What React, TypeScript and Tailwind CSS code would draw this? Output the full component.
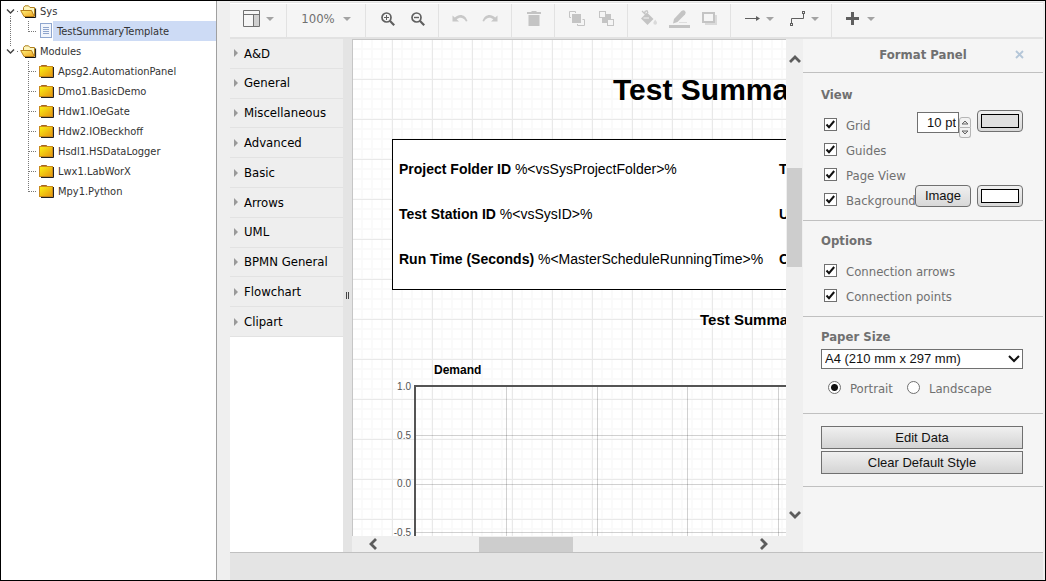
import { useState } from "react";
import type { ReactNode } from "react";

const PALETTES = [
  "A&D",
  "General",
  "Miscellaneous",
  "Advanced",
  "Basic",
  "Arrows",
  "UML",
  "BPMN General",
  "Flowchart",
  "Clipart",
];

const MODULES = [
  "Apsg2.AutomationPanel",
  "Dmo1.BasicDemo",
  "Hdw1.IOeGate",
  "Hdw2.IOBeckhoff",
  "Hsdl1.HSDataLogger",
  "Lwx1.LabWorX",
  "Mpy1.Python",
];

/* ---------- tree ---------- */

function OpenFolder() {
  return (
    <svg width="17" height="16" viewBox="0 0 17 16" className="shrink-0">
      <defs>
        <linearGradient id="open-folder" x1="0" y1="0" x2="1" y2="1">
          <stop offset="0" stopColor="#fff27a" />
          <stop offset="1" stopColor="#f0a420" />
        </linearGradient>
      </defs>
      <path d="M3.5 11V4.5L5 2.8H8.5L10 4.5H14.5V13" fill="#fdf6bd" stroke="#b0801c" />
      <path d="M15.6 5.5V14.5H5" fill="none" stroke="#111" />
      <path d="M0.7 7.5H11.5L14.3 13.5H4Z" fill="url(#open-folder)" stroke="#b8801c" />
    </svg>
  );
}

function ClosedFolder() {
  return (
    <svg width="16" height="16" viewBox="0 0 16 16" className="shrink-0">
      <defs>
        <linearGradient id="folder" x1="0" y1="0" x2="1" y2="1">
          <stop offset="0" stopColor="#fbf316" />
          <stop offset="1" stopColor="#e6940f" />
        </linearGradient>
      </defs>
      <path d="M2 14.5H14.5V4" fill="none" stroke="#222" />
      <path d="M1 4L2.5 2H7.5L9 4Z" fill="#a8661c" />
      <rect x="0.5" y="3.5" width="13" height="10" fill="url(#folder)" stroke="#c98a1c" />
    </svg>
  );
}

function DocumentIcon() {
  return (
    <svg width="14" height="16" viewBox="0 0 14 16" className="shrink-0">
      <rect x="1.5" y="0.5" width="11" height="14" fill="#f1f5fc" stroke="#8fa6cf" />
      <path d="M4 4.5H10M4 6.5H10M4 8.5H10M4 10.5H10" stroke="#8ea4cc" />
    </svg>
  );
}

function RootGuide({ last }: { last?: boolean }) {
  return (
    <svg width="19" height="20" viewBox="0 0 19 20" className="shrink-0">
      <path d="M6 8.5L9.5 12L13 8.5" fill="none" stroke="#404040" strokeWidth="1.4" />
      <path d={last ? "M9.5 0V5" : "M9.5 15V20"} stroke="#777" strokeDasharray="1 1" />
      <path d="M16 10.5H18" stroke="#777" strokeDasharray="1 1" />
    </svg>
  );
}

function ChildGuide({ last, through }: { last?: boolean; through?: boolean }) {
  return (
    <svg width="38" height="20" viewBox="0 0 38 20" className="shrink-0">
      {through && <path d="M9.5 0V20" stroke="#777" strokeDasharray="1 1" />}
      <path d={last ? "M27.5 0V11" : "M27.5 0V20"} stroke="#777" strokeDasharray="1 1" />
      <path d="M28 10.5H36" stroke="#777" strokeDasharray="1 1" />
    </svg>
  );
}

function Tree() {
  const [selected, setSelected] = useState("TestSummaryTemplate");
  const label = (name: string) =>
    selected === name
      ? "flex h-5 flex-1 items-center bg-[#cddbf5] pt-0.5 pl-1 text-left"
      : "flex h-5 flex-1 items-center pt-0.5 pl-[3px] text-left";
  return (
    <nav
      aria-label="Project"
      className="w-[216px] shrink-0 border-r border-[#a0a0a0] bg-white text-[11px] text-[#333]"
    >
      <ul>
        <li>
          <div className="flex items-center">
            <RootGuide />
            <OpenFolder />
            <button className={label("Sys")} onClick={() => setSelected("Sys")}>
              Sys
            </button>
          </div>
          <ul>
            <li className="flex items-center">
              <ChildGuide last through />
              <DocumentIcon />
              <button
                className={label("TestSummaryTemplate")}
                onClick={() => setSelected("TestSummaryTemplate")}
              >
                TestSummaryTemplate
              </button>
            </li>
          </ul>
        </li>
        <li>
          <div className="flex items-center">
            <RootGuide last />
            <OpenFolder />
            <button className={label("Modules")} onClick={() => setSelected("Modules")}>
              Modules
            </button>
          </div>
          <ul>
            {MODULES.map((name, i) => (
              <li key={name} className="flex items-center">
                <ChildGuide last={i === MODULES.length - 1} />
                <ClosedFolder />
                <button className={label(name)} onClick={() => setSelected(name)}>
                  {name}
                </button>
              </li>
            ))}
          </ul>
        </li>
      </ul>
    </nav>
  );
}

/* ---------- toolbar ---------- */

function Caret() {
  return (
    <svg width="8" height="4" viewBox="0 0 8 4">
      <path d="M0 0H8L4 4Z" fill="#a3a3a3" />
    </svg>
  );
}

function Group({ className, children }: { className: string; children: ReactNode }) {
  return (
    <div
      className={
        "flex h-full shrink-0 items-center justify-center border-r border-[#e2e2e2] pb-1 " + className
      }
    >
      {children}
    </div>
  );
}

function Tool({ label, children }: { label: string; children: ReactNode }) {
  return (
    <button aria-label={label} className="flex h-6 w-[30px] items-center justify-center">
      {children}
    </button>
  );
}

function Toolbar() {
  return (
    <div className="flex h-[34px] shrink-0 items-center overflow-hidden border-t border-white bg-[#f5f5f5]">
      <Group className="w-[57px]">
        <button aria-label="View" className="flex items-center gap-1.5">
          <svg width="17" height="17" viewBox="0 0 17 17">
            <rect x="11" y="5" width="5" height="11" fill="#cfcfcf" />
            <path d="M0.5 0.5H16.5V16.5H0.5ZM0.5 4.5H16.5M10.5 4.5V16.5" fill="none" stroke="#707070" />
          </svg>
          <Caret />
        </button>
      </Group>
      <Group className="w-[79px]">
        <button className="flex items-center gap-2 text-[13px] leading-4 text-[#707070]">
          100%
          <Caret />
        </button>
      </Group>
      <Group className="w-[73px] pl-0.5">
        <Tool label="Zoom in">
          <svg width="14" height="14" viewBox="0 0 14 14" fill="none" stroke="#5f5f5f">
            <circle cx="5.5" cy="5.5" r="4.5" strokeWidth="1.7" />
            <path d="M8.8 8.8L13.2 13.2" strokeWidth="2.2" />
            <path d="M5.5 3V8M3 5.5H8" />
          </svg>
        </Tool>
        <Tool label="Zoom out">
          <svg width="14" height="14" viewBox="0 0 14 14" fill="none" stroke="#5f5f5f">
            <circle cx="5.5" cy="5.5" r="4.5" strokeWidth="1.7" />
            <path d="M8.8 8.8L13.2 13.2" strokeWidth="2.2" />
            <path d="M3 5.5H8" strokeWidth="1.4" />
          </svg>
        </Tool>
      </Group>
      <Group className="w-[73px]">
        <Tool label="Undo">
          <svg width="16" height="9" viewBox="0 0 16 9" fill="#c8c8c8">
            <path d="M0.5 1.5V7.5H7L4.6 5.3C7.5 2.8 11.5 3 14 7.5L15.5 7C13.5 0.2 7 -0.8 2.8 3.5Z" />
          </svg>
        </Tool>
        <Tool label="Redo">
          <svg width="16" height="9" viewBox="0 0 16 9" fill="#c8c8c8">
            <path d="M15.5 1.5V7.5H9L11.4 5.3C8.5 2.8 4.5 3 2 7.5L0.5 7C2.5 0.2 9 -0.8 13.2 3.5Z" />
          </svg>
        </Tool>
      </Group>
      <Group className="w-[43px] pl-0.5">
        <Tool label="Delete">
          <svg width="14" height="15" viewBox="0 0 14 15" fill="#c4c4c4">
            <path d="M0 1H4L5 0H9L10 1H14V3H0ZM1.5 4H12.5V15H1.5Z" />
          </svg>
        </Tool>
      </Group>
      <Group className="w-[73px] pl-0.5">
        <Tool label="To front">
          <svg width="16" height="16" viewBox="0 0 16 16" fill="none" stroke="#c4c4c4">
            <rect x="3" y="3" width="9" height="9" fill="#c4c4c4" stroke="none" />
            <path d="M2 6.5H0.5V0.5H6.5V2M13.5 8.5H15.5V14.5H8.5V13" />
          </svg>
        </Tool>
        <Tool label="To back">
          <svg width="16" height="16" viewBox="0 0 16 16" fill="none" stroke="#c4c4c4">
            <rect x="3" y="3" width="9" height="9" fill="#c4c4c4" stroke="none" />
            <rect x="0.5" y="0.5" width="6" height="6" fill="#f5f5f5" />
            <rect x="8.5" y="8.5" width="6" height="6" fill="#f5f5f5" />
          </svg>
        </Tool>
      </Group>
      <Group className="w-[103px]">
        <Tool label="Fill color">
          <svg width="18" height="18" viewBox="0 0 18 18" fill="#c4c4c4">
            <path d="M1 8.5L7 2.5L13.5 9L7.5 15Z" />
            <path d="M2 1L8 7M5 4V1.5L7 0.7L8 3" fill="none" stroke="#c4c4c4" strokeWidth="1.2" />
            <path d="M3.5 8H9" stroke="#f5f5f5" />
            <path d="M15.2 9.5C16.4 11.2 17 12.2 17 13A1.8 1.8 0 0 1 13.4 13C13.4 12.2 14 11.2 15.2 9.5Z" fill="#dadada" />
          </svg>
        </Tool>
        <Tool label="Line color">
          <svg width="21" height="20" viewBox="0 0 21 20" fill="#c4c4c4">
            <path d="M5 10L12.5 2Q14.5 0.5 16 2Q17.5 3.5 16 5.5L8.5 13L4 14.5Z" />
            <path d="M10 13.5H18" stroke="#dedede" />
            <rect y="16" width="21" height="3" />
          </svg>
        </Tool>
        <Tool label="Shadow">
          <svg width="15" height="14" viewBox="0 0 15 14">
            <rect x="3" y="3" width="12" height="10" fill="#dadada" />
            <rect x="1" y="1" width="11" height="9" fill="#f5f5f5" stroke="#c4c4c4" strokeWidth="2" />
          </svg>
        </Tool>
      </Group>
      <Group className="w-[101px] gap-4 pl-0.5">
        <button aria-label="Connection" className="flex items-center gap-1.5">
          <svg width="15" height="7" viewBox="0 0 15 7">
            <path d="M0 3.5H12" stroke="#5f5f5f" />
            <path d="M11 1L15 3.5L11 6Z" fill="#5f5f5f" />
          </svg>
          <Caret />
        </button>
        <button aria-label="Waypoints" className="flex items-center gap-1.5">
          <svg width="15" height="15" viewBox="0 0 15 15" fill="none" stroke="#5f5f5f">
            <path d="M1.5 12V7.5H13.5V3" />
            <rect x="0.5" y="12.5" width="2" height="2" />
            <rect x="12.5" y="0.5" width="2" height="2" />
          </svg>
          <Caret />
        </button>
      </Group>
      <button aria-label="Insert" className="flex items-center gap-2 px-3.5 pb-1">
        <svg width="13" height="13" viewBox="0 0 13 13">
          <path d="M6.5 0V13M0 6.5H13" stroke="#5f5f5f" strokeWidth="3" />
        </svg>
        <Caret />
      </button>
    </div>
  );
}

/* ---------- shape palettes ---------- */

function Palettes() {
  return (
    <aside className="w-[113px] shrink-0 bg-white">
      <ul className="grid h-[298px] auto-rows-fr bg-[#eeeeee] text-[13px] text-black">
        {PALETTES.map((name) => (
          <li key={name} className="border-b border-[#e2e2e2]">
            <button className="flex h-full w-full items-center gap-1.5 pl-1 text-left whitespace-nowrap">
              <svg width="4" height="8" viewBox="0 0 4 8" className="shrink-0">
                <path d="M0 0L4 4L0 8Z" fill="#999" />
              </svg>
              {name}
            </button>
          </li>
        ))}
      </ul>
    </aside>
  );
}

/* ---------- canvas ---------- */

function Field({ name, value }: { name: string; value?: string }) {
  return (
    <p>
      <b>{name}</b> {value}
    </p>
  );
}

function Chart() {
  return (
    <svg width="800" height="400" viewBox="0 0 800 400" fontFamily="'Liberation Sans', sans-serif">
      <text x="44" y="14" fontSize="12" fontWeight="700">
        Demand
      </text>
      <path d="M26 75.5H800M26 124.5H800M26 172.5H800" stroke="#000" strokeOpacity="0.18" />
      <path d="M116.5 27V400M207.5 27V400M297.5 27V400M388.5 27V400" stroke="#000" strokeOpacity="0.18" />
      <path d="M800 26H25V400" fill="none" stroke="#545454" strokeWidth="2" />
      <g fontSize="10" fill="#545454" textAnchor="end">
        <text x="21" y="30">1.0</text>
        <text x="21" y="79">0.5</text>
        <text x="21" y="127">0.0</text>
        <text x="21" y="176">-0.5</text>
      </g>
    </svg>
  );
}

function ScrollArrow({ d, label }: { d: string; label: string }) {
  return (
    <button aria-label={label} className="flex size-4 shrink-0 items-center justify-center">
      <svg width="12" height="12" viewBox="0 0 12 12">
        <path d={d} fill="none" stroke="#5c5c5c" strokeWidth="2.8" />
      </svg>
    </button>
  );
}

function Canvas() {
  return (
    <div className="flex min-w-0 flex-1 bg-[#efefef]">
      <div className="flex min-w-0 flex-1 flex-col">
        <main className="relative flex-1 overflow-hidden border-t border-l border-[#c6c6c6] bg-white bg-[linear-gradient(to_right,#e9e9e9_1px,transparent_1px),linear-gradient(to_bottom,#e9e9e9_1px,transparent_1px),linear-gradient(to_right,#fafafa_2px,transparent_2px),linear-gradient(to_bottom,#fafafa_2px,transparent_2px)] bg-[size:40px_40px,40px_40px,10px_10px,10px_10px] bg-[position:39px_39px,39px_39px,8px_8px,8px_8px] font-['Liberation_Sans',Arial,sans-serif] text-[14px] leading-4 whitespace-nowrap text-black">
          <h1 className="absolute top-[32px] left-[260px] text-[30px] leading-9 font-bold">
            Test Summary
          </h1>
          <section className="absolute top-[99px] left-[39px] grid h-[151px] w-[780px] grid-cols-[380px_1fr] content-start gap-y-[29px] border border-black bg-white pt-[21px] pl-1.5">
            <Field name="Project Folder ID" value="%<vsSysProjectFolder>%" />
            <Field name="T" />
            <Field name="Test Station ID" value="%<vsSysID>%" />
            <Field name="U" />
            <Field name="Run Time (Seconds)" value="%<MasterScheduleRunningTime>%" />
            <Field name="C" />
          </section>
          <h2 className="absolute top-[272px] left-[347px] text-[15px] font-bold">Test Summary</h2>
          <div className="absolute top-[320px] left-[37px]">
            <Chart />
          </div>
        </main>
        <div className="flex h-4 shrink-0 items-center pr-3.5 pl-[13px]">
          <ScrollArrow label="Scroll left" d="M9 1L4 6L9 11" />
          <div className="flex h-full min-w-0 flex-1 pt-px">
            <div className="w-[26%]" />
            <div className="w-[94px] bg-[#cdcdcd]" />
          </div>
          <ScrollArrow label="Scroll right" d="M3 1L8 6L3 11" />
        </div>
      </div>
      <div className="flex w-[17px] shrink-0 flex-col items-center pt-3 pb-[29px]">
        <ScrollArrow label="Scroll up" d="M1 9L6 4L11 9" />
        <div className="flex w-full flex-1 flex-col px-px">
          <div className="h-[23%]" />
          <div className="h-[99px] bg-[#cdcdcd]" />
        </div>
        <ScrollArrow label="Scroll down" d="M1 3L6 8L11 3" />
      </div>
    </div>
  );
}

/* ---------- format panel ---------- */

function Check({ label }: { label: string }) {
  return (
    <label className="flex h-[25px] items-start">
      <span className="grid size-[13px] shrink-0">
        <input
          type="checkbox"
          defaultChecked
          className="peer col-start-1 row-start-1 size-[13px] appearance-none border border-[#707070] bg-white"
        />
        <svg
          width="13"
          height="13"
          viewBox="0 0 13 13"
          className="pointer-events-none invisible col-start-1 row-start-1 peer-checked:visible"
        >
          <path d="M2.5 6.5L5 9.2L10.2 3" fill="none" stroke="#111" strokeWidth="2" />
        </svg>
      </span>
      <span className="pl-[9px] leading-4">{label}</span>
    </label>
  );
}

function Radio({ label, checked }: { label: string; checked?: boolean }) {
  return (
    <label className="flex items-start">
      <input
        type="radio"
        name="orientation"
        defaultChecked={checked}
        className="size-[13px] shrink-0 appearance-none rounded-full border border-[#707070] bg-white checked:bg-[radial-gradient(circle,#111_0_3px,#fff_4px)]"
      />
      <span className="pl-[9px] leading-4">{label}</span>
    </label>
  );
}

function Swatch({ label, grey }: { label: string; grey?: boolean }) {
  return (
    <button
      aria-label={label}
      className="h-[22px] w-[46px] rounded-[4px] border border-[#707070] bg-linear-to-b from-[#f0f0f0] to-[#d8d8d8] p-[3px]"
    >
      <span
        className={
          grey
            ? "block h-full border border-black bg-[#e0e0e0]"
            : "block h-full border border-black bg-white"
        }
      />
    </button>
  );
}

function Spin({ label, d }: { label: string; d: string }) {
  return (
    <button
      aria-label={label}
      className="flex flex-1 items-center justify-center border border-[#b5b5b5] bg-[#f2f2f2] first:rounded-t-[3px] last:rounded-b-[3px] last:border-t-0"
    >
      <svg width="8" height="5" viewBox="0 0 8 5">
        <path d={d} fill="#ddd" stroke="#666" />
      </svg>
    </button>
  );
}

const SECTION = "border-b border-[#c0c0c0] px-[18px]";
const ARIAL = "font-['Liberation_Sans',Arial,sans-serif] text-[13px] text-[#111]";

function FormatPanel() {
  return (
    <aside className="w-60 shrink-0 bg-[#f5f5f5] text-[13px] leading-4 text-[#707070]">
      <header className="flex h-[34px] items-center border-b border-[#c0c0c0] px-[18px] pb-0.5">
        <h2 className="flex-1 pl-3 text-center font-bold">Format Panel</h2>
        <button aria-label="Close" className="flex w-3 justify-center">
          <svg width="9" height="9" viewBox="0 0 9 9">
            <path d="M1 1L8 8M8 1L1 8" stroke="#b4c6d8" strokeWidth="1.9" />
          </svg>
        </button>
      </header>

      <section className={SECTION + " relative h-[148px] pt-3.5"}>
        <h3 className="mb-[15px] font-bold">View</h3>
        <div className="pl-[3px]">
          <Check label="Grid" />
          <Check label="Guides" />
          <Check label="Page View" />
          <Check label="Background" />
        </div>
        <div className="absolute top-[37px] right-5 flex items-start">
          <input
            aria-label="Grid size"
            defaultValue="10 pt"
            className={ARIAL + " mt-0.5 h-[21px] w-[42px] border border-[#707070] bg-white pr-0.5 text-right"}
          />
          <div className="mt-[7px] mr-1.5 flex h-[21px] w-3 flex-col">
            <Spin label="Increase" d="M1 4L4 1L7 4Z" />
            <Spin label="Decrease" d="M1 1L4 4L7 1Z" />
          </div>
          <Swatch label="Grid color" grey />
        </div>
        <div className="absolute top-28 right-5 flex items-start gap-1.5">
          <button
            className={
              ARIAL +
              " h-[22px] w-14 rounded-[4px] border border-[#707070] bg-linear-to-b from-[#f0f0f0] to-[#d8d8d8]"
            }
          >
            Image
          </button>
          <Swatch label="Background color" />
        </div>
      </section>

      <section className={SECTION + " h-24 pt-3"}>
        <h3 className="mb-[15px] font-bold">Options</h3>
        <div className="pl-[3px]">
          <Check label="Connection arrows" />
          <Check label="Connection points" />
        </div>
      </section>

      <section className={SECTION + " h-[97px] pt-3"}>
        <h3 className="mb-1 font-bold">
          <label htmlFor="paper">Paper Size</label>
        </h3>
        <div className="mr-0.5 grid">
          <select
            id="paper"
            className={
              ARIAL +
              " col-start-1 row-start-1 h-5 w-full appearance-none border border-[#707070] bg-white pl-[3px] leading-4"
            }
          >
            <option>A4 (210 mm x 297 mm)</option>
          </select>
          <svg
            width="12"
            height="8"
            viewBox="0 0 12 8"
            className="pointer-events-none col-start-1 row-start-1 mr-[3px] self-center justify-self-end"
          >
            <path d="M1 1L6 6L11 1" fill="none" stroke="#111" strokeWidth="2" />
          </svg>
        </div>
        <div className="mt-3 flex gap-3.5 pl-[7px]">
          <Radio label="Portrait" checked />
          <Radio label="Landscape" />
        </div>
      </section>

      <section className={SECTION + " flex h-[73px] flex-col gap-0.5 pt-3 pr-5"}>
        {["Edit Data", "Clear Default Style"].map((text) => (
          <button
            key={text}
            className={
              ARIAL + " h-[23px] border border-[#707070] bg-linear-to-b from-[#f0f0f0] to-[#d4d4d4]"
            }
          >
            {text}
          </button>
        ))}
      </section>
    </aside>
  );
}

export default function App() {
  return (
    <div className="flex h-screen min-h-[400px] w-full border border-black bg-[#efefef] pr-0.5 font-['DejaVu_Sans_Condensed','DejaVu_Sans',sans-serif]">
      <Tree />
      <div className="ml-[13px] flex min-w-0 flex-1 flex-col pt-px">
        <div className="border-t border-[#e2e2e2]">
          <Toolbar />
        </div>
        <div className="flex min-h-0 flex-1 border-t-2 border-[#e2e2e2]">
          <Palettes />
          <div className="flex w-[9px] shrink-0 items-center justify-center gap-px bg-[#e4e4e4]">
            <span className="h-[7px] w-px bg-[#444]" />
            <span className="h-[7px] w-px bg-[#444]" />
          </div>
          <Canvas />
          <FormatPanel />
        </div>
        <footer className="h-7 shrink-0 border-t border-[#c0c0c0] bg-[#e4e4e4]" />
      </div>
    </div>
  );
}
